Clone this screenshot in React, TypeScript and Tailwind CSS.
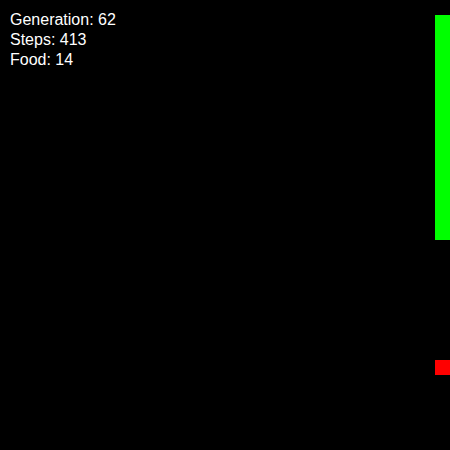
export default function App() {
  return (
    <div className="relative w-[450px] h-[450px] bg-black overflow-hidden">
      <div
        className="flex flex-col pt-[10px] pl-[10px] text-white text-[16px] leading-[20px]"
        style={{ fontFamily: '"Liberation Sans", Arial, sans-serif' }}
      >
        <span>Generation: 62</span>
        <span>Steps: 413</span>
        <span>Food: 14</span>
      </div>
      <div className="absolute left-[435px] top-[15px] w-[15px] h-[225px] bg-[#00ff00]" />
      <div className="absolute left-[435px] top-[360px] w-[15px] h-[15px] bg-[#ff0000]" />
    </div>
  );
}
